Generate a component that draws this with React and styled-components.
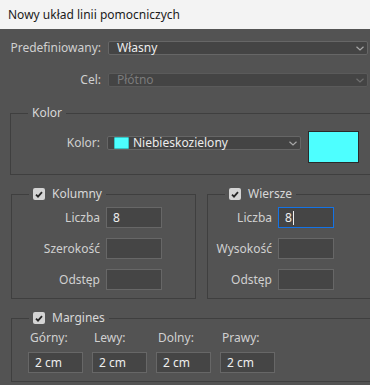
import styled, { createGlobalStyle } from "styled-components";

const GlobalStyle = createGlobalStyle`
  html, body {
    margin: 0;
    padding: 0;
    background: #535353;
    overflow: hidden;
  }
  body {
    font-family: "Noto Sans", "Open Sans", sans-serif;
    font-size: 12px;
  }
`;

const Window = styled.div`
  width: 380px;
  height: 385px;
  background: #535353;
`;

const TitleBar = styled.div`
  height: 29px;
  background: #f3f3f3;
  color: #1b1b1b;
  display: flex;
  align-items: center;
  padding-left: 8px;
  font-size: 12px;
`;

const Body = styled.div`
  padding-top: 12px;
`;

const PresetGrid = styled.div`
  display: grid;
  grid-template-columns: 101px 260px;
  column-gap: 7px;
  row-gap: 18px;
  align-items: center;
`;

const Label = styled.div`
  text-align: right;
  color: #d0d0d0;
  line-height: 14px;
  white-space: nowrap;
`;

const Select = styled.div`
  box-sizing: border-box;
  height: 14px;
  display: flex;
  align-items: center;
  gap: 4px;
  padding: 0 3px 0 ${(p) => p.$padLeft || 8}px;
  border: 1px solid ${(p) => (p.$disabled ? "#5a5a5a" : "#666666")};
  border-radius: 2px;
  background: #444444;
  color: ${(p) => (p.$disabled ? "#7b7b7b" : "#ececec")};
  line-height: 12px;
`;

const SelectText = styled.span`
  flex: 1;
  white-space: nowrap;
`;

const Chevron = ({ dim }) => (
  <svg width="8" height="5" viewBox="0 0 8 5">
    <path
      d="M0.5 0.8 L4 4 L7.5 0.8"
      fill="none"
      stroke={dim ? "#707070" : "#a8a8a8"}
      strokeWidth="1.2"
    />
  </svg>
);

const Group = styled.fieldset`
  box-sizing: border-box;
  margin: ${(p) => p.$mt || 0}px 0 0 ${(p) => p.$ml || 0}px;
  width: ${(p) => p.$w}px;
  padding: ${(p) => p.$pad};
  border: 1px solid #3f3f3f;
  min-width: 0;
`;

const Legend = styled.legend`
  margin-left: ${(p) => p.$ml ?? 17}px;
  padding: 0 4px;
  display: flex;
  align-items: center;
  gap: 7px;
  color: #d8d8d8;
  line-height: 14px;
  height: 14px;
`;

const Box = styled.span`
  box-sizing: border-box;
  width: 12px;
  height: 12px;
  border-radius: 2px;
  background: #d4d4d4;
  display: inline-flex;
  align-items: center;
  justify-content: center;
`;

const Checkbox = () => (
  <Box>
    <svg width="8" height="7" viewBox="0 0 8 7">
      <path
        d="M1 3.6 L3 5.6 L7 1.2"
        fill="none"
        stroke="#262626"
        strokeWidth="1.8"
      />
    </svg>
  </Box>
);

const ColorRow = styled.div`
  display: grid;
  grid-template-columns: 89px 194px 51px;
  column-gap: 7px;
  align-items: start;
`;

const ColorLabel = styled(Label)`
  margin-top: 5px;
`;

const ColorSelect = styled(Select)`
  margin-top: 5px;
`;

const Chip = styled.span`
  box-sizing: border-box;
  width: 15px;
  height: 12px;
  background: #4dffff;
  border: 1px solid #34c4c4;
  border-radius: 1px;
`;

const Swatch = styled.div`
  box-sizing: border-box;
  height: 32px;
  background: #4dffff;
  border: 1px solid #2a2a2a;
`;

const SplitRow = styled.div`
  display: flex;
  gap: 11px;
  margin: 12px 0 0 11px;
`;

const FieldGrid = styled.div`
  display: grid;
  grid-template-columns: ${(p) => p.$labelW}px 56px;
  column-gap: 6px;
  row-gap: 10px;
  align-items: center;
`;

const Input = styled.div`
  box-sizing: border-box;
  height: 21px;
  width: ${(p) => p.$w || 56}px;
  padding-left: 6px;
  display: flex;
  align-items: center;
  background: #454545;
  border: 1px solid ${(p) => (p.$focused ? "#1473e6" : "#676767")};
  color: #eeeeee;
  line-height: 14px;
`;

const Caret = styled.span`
  display: inline-block;
  width: 1px;
  height: 14px;
  background: #f0f0f0;
  margin-left: 1px;
`;

const MarginGrid = styled.div`
  display: grid;
  grid-template-columns: repeat(4, 55px);
  column-gap: 9px;
  row-gap: 7px;
`;

const MarginLabel = styled.div`
  color: #d0d0d0;
  line-height: 14px;
  padding-left: 2px;
`;

const columns = [
  { label: "Liczba", value: "8" },
  { label: "Szerokość", value: "" },
  { label: "Odstęp", value: "" },
];

const rows = [
  { label: "Liczba", value: "8", focused: true },
  { label: "Wysokość", value: "" },
  { label: "Odstęp", value: "" },
];

const margins = ["Górny:", "Lewy:", "Dolny:", "Prawy:"];

function Fields({ items, labelW }) {
  return (
    <FieldGrid $labelW={labelW}>
      {items.map((f) => [
        <Label key={f.label + "l"}>{f.label}</Label>,
        <Input key={f.label + "i"} $focused={f.focused}>
          {f.value}
          {f.focused && <Caret />}
        </Input>,
      ])}
    </FieldGrid>
  );
}

export default function App() {
  return (
    <Window>
      <GlobalStyle />
      <TitleBar>Nowy układ linii pomocniczych</TitleBar>
      <Body>
        <PresetGrid>
          <Label>Predefiniowany:</Label>
          <Select>
            <SelectText>Własny</SelectText>
            <Chevron />
          </Select>
          <Label>Cel:</Label>
          <Select $disabled>
            <SelectText>Płótno</SelectText>
            <Chevron dim />
          </Select>
        </PresetGrid>

        <Group $mt={19} $ml={10} $w={372} $pad="11px 0 11px 0">
          <Legend>Kolor</Legend>
          <ColorRow>
            <ColorLabel>Kolor:</ColorLabel>
            <ColorSelect $padLeft={6}>
              <Chip />
              <SelectText>Niebieskozielony</SelectText>
              <Chevron />
            </ColorSelect>
            <Swatch />
          </ColorRow>
        </Group>

        <SplitRow>
          <Group $w={185} $pad="6px 0 8px 0">
            <Legend>
              <Checkbox />
              Kolumny
            </Legend>
            <Fields items={columns} labelW={88} />
          </Group>
          <Group $w={170} $pad="6px 0 8px 0">
            <Legend>
              <Checkbox />
              Wiersze
            </Legend>
            <Fields items={rows} labelW={64} />
          </Group>
        </SplitRow>

        <Group $mt={12} $ml={11} $w={372} $pad="6px 0 8px 16px">
          <Legend $ml={1}>
            <Checkbox />
            Margines
          </Legend>
          <MarginGrid>
            {margins.map((m) => (
              <MarginLabel key={m}>{m}</MarginLabel>
            ))}
            {margins.map((m) => (
              <Input key={m + "v"} $w={55}>
                2 cm
              </Input>
            ))}
          </MarginGrid>
        </Group>
      </Body>
    </Window>
  );
}
